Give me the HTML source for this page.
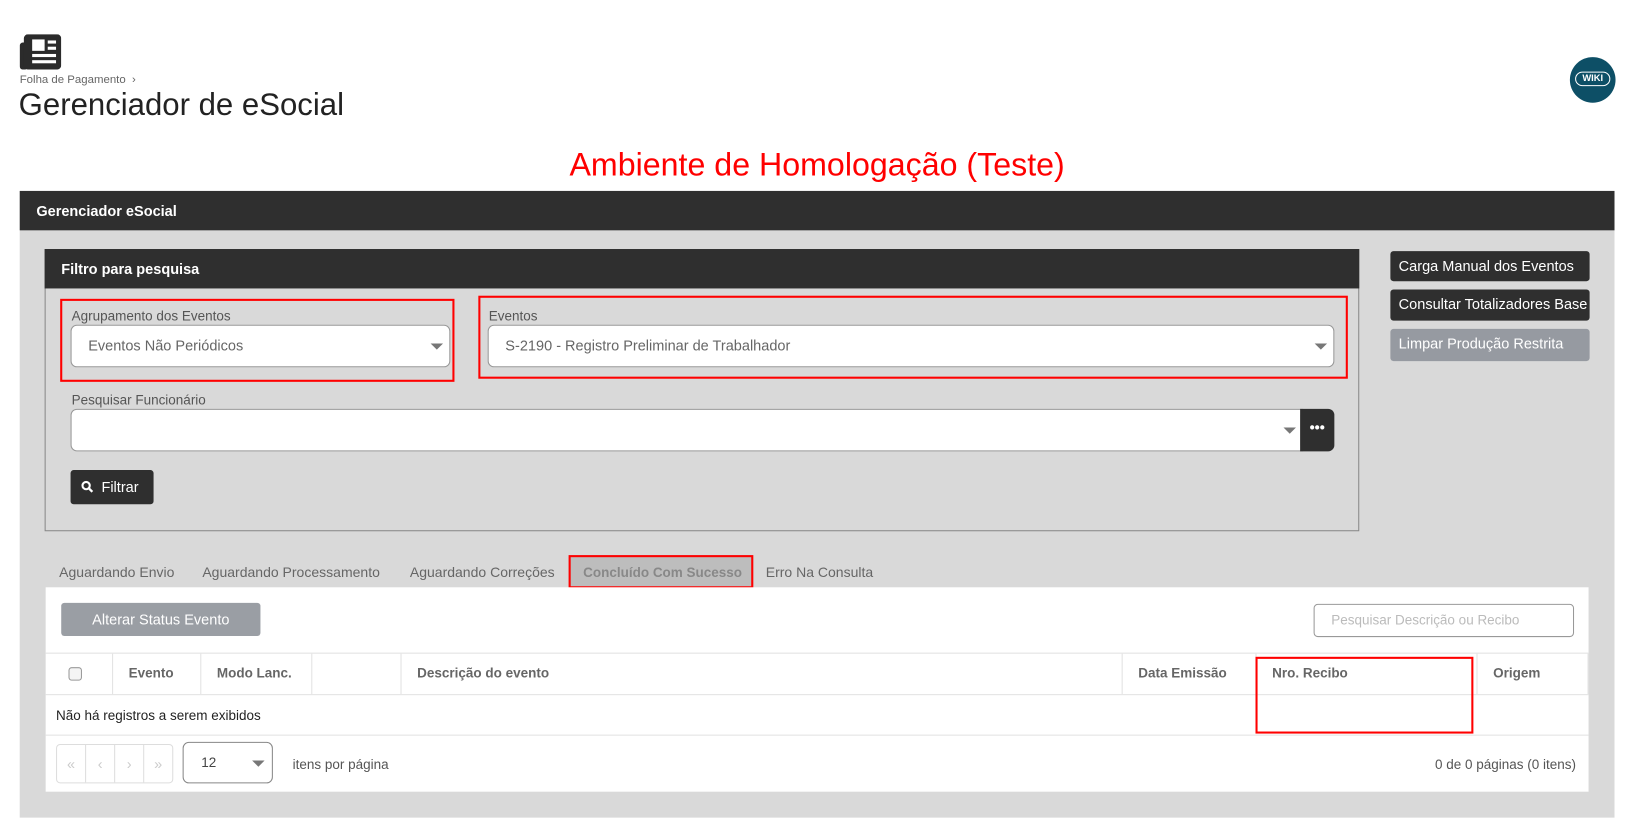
<!DOCTYPE html>
<html><head><meta charset="utf-8"><style>
*{box-sizing:border-box;margin:0;padding:0}
body{width:1627px;height:827px;overflow:hidden;background:#fff;font-family:"Liberation Sans",Arial,sans-serif;}
#w{position:absolute;left:0;top:0;width:1568px;height:797px;transform:scale(1.0376);transform-origin:0 0;}
.a{position:absolute}
.dark{background:#2f2f2f;color:#fff}
.lbl{font-size:13px;color:#555}
.sel{background:#fff;border:1px solid #999;border-radius:6px;font-size:14px;color:#666;padding-left:16px;line-height:38px}
.tri{position:absolute;right:6px;top:17px;width:0;height:0;border-left:6px solid transparent;border-right:6px solid transparent;border-top:6px solid #777}
.red{border:2.5px solid #f00}
.btn{border-radius:3px;font-size:14px;color:#fff;padding-left:8px;line-height:29px}
.tab{font-size:13.5px;color:#666;top:544px}
.th{font-size:13px;color:#666;font-weight:bold;top:641px}
.vl{position:absolute;top:630px;height:39px;width:1px;background:#e2e2e2}
</style></head><body><div id="w">
<svg class="a" style="left:19px;top:33px" width="40" height="34" viewBox="0 0 40 34"><rect x="0" y="8" width="8" height="26" rx="3" fill="#2b2b2b"/><rect x="4" y="0" width="36" height="34" rx="4" fill="#2b2b2b"/><rect x="12" y="5" width="12" height="11" fill="#fff"/><rect x="27" y="6" width="8" height="3" fill="#fff"/><rect x="27" y="12" width="8" height="3" fill="#fff"/><rect x="12" y="19" width="23" height="3" fill="#fff"/><rect x="12" y="25" width="23" height="3" fill="#fff"/></svg>
<div class="a" style="left:19px;top:71px;font-size:11px;color:#666">Folha de Pagamento &nbsp;›</div>
<div class="a" style="left:18px;top:85px;font-size:30px;color:#222">Gerenciador de eSocial</div>
<div class="a" style="left:1513px;top:55px;width:44px;height:44px;border-radius:50%;background:#0d4f66;overflow:hidden"><div style="position:absolute;left:5px;top:14px;width:34px;height:14px;border:1.5px solid #fff;border-radius:7px;color:#fff;font-size:9px;font-weight:bold;text-align:center;line-height:11px">WIKI</div></div>
<div class="a" style="left:0;width:1575px;text-align:center;top:141px;font-size:31px;color:#f00">Ambiente de Homologação (Teste)</div>
<div class="a" style="left:19px;top:222px;width:1537px;height:566px;background:#d9d9d9"></div>
<div class="a dark" style="left:19px;top:184px;width:1537px;height:38px;font-size:14px;font-weight:bold;padding-left:16px;line-height:38px">Gerenciador eSocial</div>
<div class="a" style="left:43px;top:240px;width:1267px;height:272px;border:1px solid #888"></div>
<div class="a dark" style="left:43px;top:240px;width:1267px;height:38px;font-size:14px;font-weight:bold;padding-left:16px;line-height:38px">Filtro para pesquisa</div>
<div class="a red" style="left:58px;top:288px;width:380px;height:80px"></div>
<div class="a red" style="left:461px;top:285px;width:838px;height:80px"></div>
<div class="a lbl" style="left:69px;top:297px">Agrupamento dos Eventos</div>
<div class="a lbl" style="left:471px;top:297px">Eventos</div>
<div class="a sel" style="left:68px;top:313px;width:366px;height:41px">Eventos Não Periódicos<div class="tri"></div></div>
<div class="a sel" style="left:470px;top:313px;width:816px;height:41px">S-2190 - Registro Preliminar de Trabalhador<div class="tri"></div></div>
<div class="a lbl" style="left:69px;top:378px">Pesquisar Funcionário</div>
<div class="a sel" style="left:68px;top:394px;width:1188px;height:41px;border-radius:6px 0 0 6px"><div class="tri"></div></div>
<div class="a dark" style="left:1253px;top:394px;width:33px;height:41px;border-radius:0 6px 6px 0;text-align:center;font-size:14px;font-weight:bold;line-height:36px">•••</div>
<div class="a dark btn" style="left:68px;top:453px;width:80px;height:33px;line-height:33px;padding-left:10px"><svg width="12" height="12" viewBox="0 0 12 12" style="vertical-align:-1px"><circle cx="5" cy="5" r="3.5" stroke="#fff" stroke-width="2" fill="none"/><path d="M7.5 7.5L11 11" stroke="#fff" stroke-width="2.2"/></svg>&nbsp; Filtrar</div>
<div class="a dark btn" style="left:1340px;top:242px;width:192px;height:29px">Carga Manual dos Eventos</div>
<div class="a dark btn" style="left:1340px;top:279px;width:192px;height:30px;overflow:visible;white-space:nowrap">Consultar Totalizadores Base</div>
<div class="a btn" style="left:1340px;top:317px;width:192px;height:31px;background:#969aa1">Limpar Produção Restrita</div>
<div class="a tab" style="left:57px">Aguardando Envio</div>
<div class="a tab" style="left:195px">Aguardando Processamento</div>
<div class="a tab" style="left:395px">Aguardando Correções</div>
<div class="a red" style="left:548px;top:535px;width:178px;height:32px;background:#bdbdbd"></div>
<div class="a tab" style="left:562px;font-weight:bold;color:#888;font-size:13px">Concluído Com Sucesso</div>
<div class="a tab" style="left:738px">Erro Na Consulta</div>
<div class="a" style="left:44px;top:566px;width:1487px;height:197px;background:#fff"></div>
<div class="a btn" style="left:59px;top:581px;width:192px;height:32px;background:#9a9ea4;text-align:center;padding:0;line-height:32px">Alterar Status Evento</div>
<div class="a" style="left:1266px;top:582px;width:251px;height:32px;border:1px solid #999;border-radius:4px;font-size:13px;color:#bbb;padding-left:16px;line-height:30px">Pesquisar Descrição ou Recibo</div>
<div class="a" style="left:44px;top:629px;width:1487px;height:1px;background:#e2e2e2"></div>
<div class="a" style="left:44px;top:669px;width:1487px;height:1px;background:#e2e2e2"></div>
<div class="a" style="left:44px;top:708px;width:1487px;height:1px;background:#e2e2e2"></div>
<div class="vl" style="left:108px"></div><div class="vl" style="left:193px"></div><div class="vl" style="left:300px"></div><div class="vl" style="left:386px"></div><div class="vl" style="left:1081px"></div><div class="vl" style="left:1210px"></div><div class="vl" style="left:1423px"></div><div class="vl" style="left:1530px"></div>
<div class="a" style="left:66px;top:643px;width:13px;height:13px;border:1px solid #999;border-radius:3px;background:#f4f4f4"></div>
<div class="a th" style="left:124px">Evento</div>
<div class="a th" style="left:209px">Modo Lanc.</div>
<div class="a th" style="left:402px">Descrição do evento</div>
<div class="a th" style="left:1097px">Data Emissão</div>
<div class="a th" style="left:1226px">Nro. Recibo</div>
<div class="a th" style="left:1439px">Origem</div>
<div class="a red" style="left:1210px;top:633px;width:210px;height:74px"></div>
<div class="a" style="left:54px;top:682px;font-size:13px;color:#222">Não há registros a serem exibidos</div>
<div class="a" style="left:54px;top:717px;width:113px;height:38px;border:1px solid #ddd;border-radius:4px;display:flex;color:#ccc;font-size:14px">
<div style="flex:1;text-align:center;line-height:36px;border-right:1px solid #ddd">«</div><div style="flex:1;text-align:center;line-height:36px;border-right:1px solid #ddd">‹</div><div style="flex:1;text-align:center;line-height:36px;border-right:1px solid #ddd">›</div><div style="flex:1;text-align:center;line-height:36px">»</div></div>
<div class="a" style="left:176px;top:715px;width:87px;height:40px;border:1px solid #888;border-radius:6px;font-size:13px;color:#444;padding-left:17px;line-height:38px">12<div class="tri" style="top:17px;right:7px"></div></div>
<div class="a" style="left:282px;top:729px;font-size:13px;color:#555">itens por página</div>
<div class="a" style="left:1383px;top:729px;font-size:13px;color:#555">0 de 0 páginas (0 itens)</div>
</div></body></html>
